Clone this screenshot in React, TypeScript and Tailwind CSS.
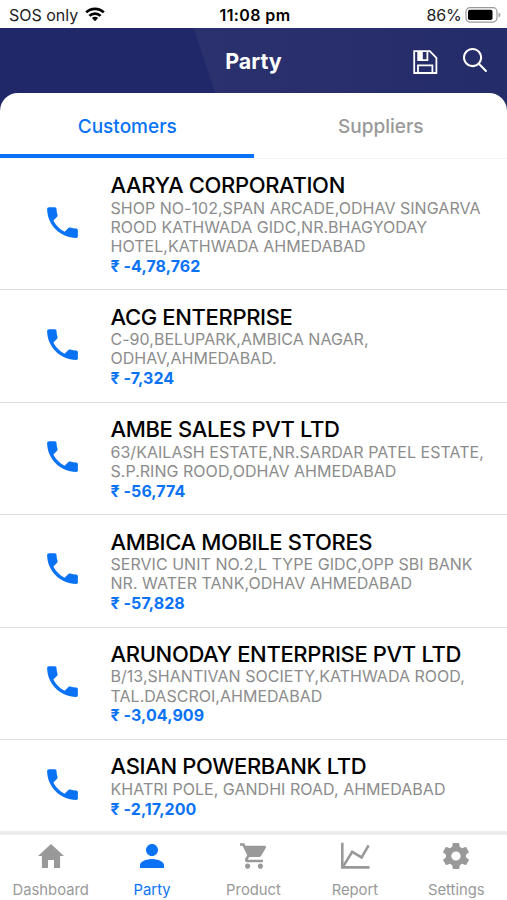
import { useState } from 'react';
import { IoIosSearch, IoMdCall, IoMdCart, IoMdHome, IoMdPerson, IoMdSettings } from 'react-icons/io';

type Party = { name: string; address: string[]; balance: string };

const customers: Party[] = [
  {
    name: 'AARYA CORPORATION',
    address: ['SHOP NO-102,SPAN ARCADE,ODHAV SINGARVA', 'ROOD KATHWADA GIDC,NR.BHAGYODAY', 'HOTEL,KATHWADA AHMEDABAD'],
    balance: '₹ -4,78,762',
  },
  {
    name: 'ACG ENTERPRISE',
    address: ['C-90,BELUPARK,AMBICA NAGAR,', 'ODHAV,AHMEDABAD.'],
    balance: '₹ -7,324',
  },
  {
    name: 'AMBE SALES PVT LTD',
    address: ['63/KAILASH ESTATE,NR.SARDAR PATEL ESTATE,', 'S.P.RING ROOD,ODHAV AHMEDABAD'],
    balance: '₹ -56,774',
  },
  {
    name: 'AMBICA MOBILE STORES',
    address: ['SERVIC UNIT NO.2,L TYPE GIDC,OPP SBI BANK', 'NR. WATER TANK,ODHAV AHMEDABAD'],
    balance: '₹ -57,828',
  },
  {
    name: 'ARUNODAY ENTERPRISE PVT LTD',
    address: ['B/13,SHANTIVAN SOCIETY,KATHWADA ROOD,', 'TAL.DASCROI,AHMEDABAD'],
    balance: '₹ -3,04,909',
  },
  {
    name: 'ASIAN POWERBANK LTD',
    address: ['KHATRI POLE, GANDHI ROAD, AHMEDABAD'],
    balance: '₹ -2,17,200',
  },
];

function ReportIcon({ className }: { className?: string }) {
  return (
    <svg viewBox="0 0 32 32" fill="none" stroke="currentColor" strokeWidth="2.6" className={className}>
      <path d="M3.3 2.8V27.4H30.5" />
      <path d="M4.2 26.4L13.2 11.8L22.6 17.4L29.6 5.4" />
    </svg>
  );
}

const navItems = [
  { label: 'Dashboard', Icon: IoMdHome },
  { label: 'Party', Icon: IoMdPerson },
  { label: 'Product', Icon: IoMdCart },
  { label: 'Report', Icon: ReportIcon },
  { label: 'Settings', Icon: IoMdSettings },
];

function StatusBar() {
  return (
    <div className="grid h-7 shrink-0 grid-cols-3 items-center bg-white pt-0.5 text-[16px] text-[#222]">
      <div className="flex items-center gap-[7px] pl-[9px]">
        <span>SOS only</span>
        <svg width="20" height="15" viewBox="0 0 20 15" fill="none" stroke="#000" strokeWidth="2.7" className="mb-0.5">
          <path d="M1.2 5.4a12.6 12.6 0 0 1 17.6 0" />
          <path d="M4.4 8.9a8 8 0 0 1 11.2 0" />
          <path d="M10 14.2L6.9 11.1a4.4 4.4 0 0 1 6.2 0z" fill="#000" stroke="none" />
        </svg>
      </div>
      <div className="pl-[3px] text-center font-semibold tracking-[0.4px] text-black">11:08 pm</div>
      <div className="flex items-center justify-end gap-[3px] pr-[6.5px]">
        <span className="tracking-[-0.2px]">86%</span>
        <svg width="36" height="16" viewBox="0 0 36 16" className="mb-px">
          <rect x="1" y="0.7" width="31" height="14.4" rx="4" fill="none" stroke="#999" strokeWidth="1.2" />
          <rect x="3" y="2.7" width="24.5" height="10.4" rx="1.8" fill="#000" />
          <path d="M33.6 5.6v4.8q1.8-.8 1.8-2.4t-1.8-2.4z" fill="#999" />
        </svg>
      </div>
    </div>
  );
}

function Header() {
  return (
    <header className="relative flex h-[85px] shrink-0 items-start justify-end bg-[#20286a]">
      <svg className="absolute inset-0 h-full w-full" viewBox="0 0 507 85" preserveAspectRatio="none">
        <defs>
          <linearGradient id="shade" x1="0" x2="1">
            <stop offset="0" stopColor="#2b316d" />
            <stop offset="1" stopColor="#242c69" />
          </linearGradient>
        </defs>
        <path d="M194 0L222 85H507V0z" fill="url(#shade)" />
      </svg>
      <h1 className="absolute inset-x-0 top-[18px] text-center text-[21.5px] leading-[30px] font-bold text-white">Party</h1>
      <div className="relative flex text-white">
        <button className="mt-[21px] mr-[21.5px]">
          <svg width="26" height="26" viewBox="0 0 26 26" fill="none" stroke="currentColor" strokeWidth="1.8">
            <path d="M2.2 2.2H17.8L24.4 8.8V24H2.2z" />
            <path d="M6.2 2.4V11.2H15.4V2.4" />
            <path d="M6 2.4H10.8V11H6z" fill="currentColor" stroke="none" />
            <path d="M6 24V16.4H20.4V24" />
          </svg>
        </button>
        <button className="mt-[15.5px] mr-[16px]">
          <IoIosSearch className="size-8" />
        </button>
      </div>
    </header>
  );
}

function PartyRow({ party }: { party: Party }) {
  return (
    <li className="flex border-b border-[#dedede] pt-[13.4px] pb-[13.4px]">
      <div className="flex w-[110.5px] shrink-0 items-center pb-1 pl-[41.5px]">
        <IoMdCall className="size-[41px] text-[#0a73f5]" />
      </div>
      <div className="whitespace-nowrap">
        <div className="text-[22px] leading-[26.4px] font-medium tracking-[-0.35px] text-black">{party.name}</div>
        {party.address.map((line) => (
          <div key={line} className="text-[16px] leading-[19.2px] tracking-[0.03px] text-[#8c8c8c]">{line}</div>
        ))}
        <div className="pt-[0.6px] text-[16px] leading-[19.2px] font-bold tracking-[0.06px] text-[#0a73f5]">{party.balance}</div>
      </div>
    </li>
  );
}

export default function App() {
  const [tab, setTab] = useState('Customers');
  const [page, setPage] = useState('Party');

  return (
    <div className="flex h-[900px] w-[507px] flex-col overflow-hidden bg-white font-['Inter','Noto_Sans',sans-serif]">
      <StatusBar />
      <Header />
      <div className="relative -mt-5 flex h-[65.8px] shrink-0 overflow-hidden rounded-t-[18px] border-b border-[#f3f3f3] bg-white">
        {['Customers', 'Suppliers'].map((name) => (
          <button
            key={name}
            onClick={() => setTab(name)}
            className={`flex-1 border-b-4 pt-[7px] pl-px text-[19px] font-medium ${
              tab === name ? 'border-[#0a73f5] text-[#0a73f5]' : 'border-transparent text-[#999]'
            }`}
          >
            {name}
          </button>
        ))}
      </div>
      <ul className="min-h-0 flex-1 overflow-hidden">
        {customers.map((party) => (
          <PartyRow key={party.name} party={party} />
        ))}
      </ul>
      <nav className="grid h-[69px] shrink-0 grid-cols-5 border-t-4 border-[#ececec] bg-white">
        {navItems.map(({ label, Icon }) => (
          <button
            key={label}
            onClick={() => setPage(label)}
            className={`flex flex-col items-center pt-[4.5px] ${page === label ? 'text-[#0a73f5]' : 'text-[#999]'}`}
          >
            <Icon className="size-8" />
            <span className="mt-2 text-[14.8px] leading-5">{label}</span>
          </button>
        ))}
      </nav>
    </div>
  );
}
